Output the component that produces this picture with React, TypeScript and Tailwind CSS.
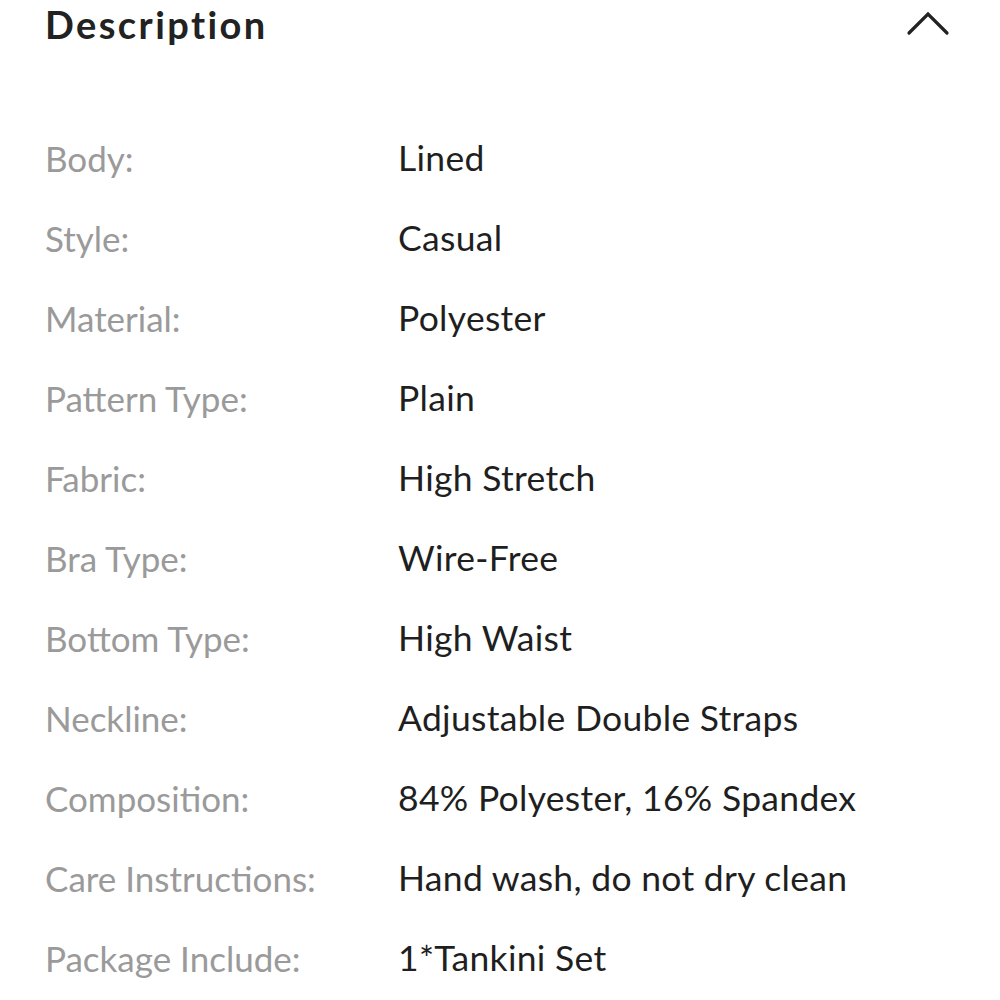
const specs = [
  ["Body:", "Lined"],
  ["Style:", "Casual"],
  ["Material:", "Polyester"],
  ["Pattern Type:", "Plain"],
  ["Fabric:", "High Stretch"],
  ["Bra Type:", "Wire-Free"],
  ["Bottom Type:", "High Waist"],
  ["Neckline:", "Adjustable Double Straps"],
  ["Composition:", "84% Polyester, 16% Spandex"],
  ["Care Instructions:", "Hand wash, do not dry clean"],
  ["Package Include:", "1*Tankini Set"],
];

export default function App() {
  return (
    <main className="w-[1000px] h-[1000px] bg-white overflow-hidden font-['Lato','Noto_Sans',sans-serif]">
      <div className="flex items-center justify-between h-[48px] pl-[45px] pr-[50px]">
        <h2 className="text-[38px] font-bold tracking-[2.4px] text-[#222]">Description</h2>
        <svg width="44" height="28" viewBox="0 0 44 28" fill="none" stroke="#222" strokeWidth="3.2" strokeLinecap="round" strokeLinejoin="miter">
          <path d="M3 23 L22 4 L41 23" />
        </svg>
      </div>

      <div className="flex flex-col pt-[70px] pl-[45px]">
        {specs.map(([label, value]) => (
          <div key={label} className="flex items-center h-[80px]">
            <span className="w-[353px] text-[35px] text-[#9a9a9a]">{label}</span>
            <span className="text-[35.5px] tracking-[0.3px] text-[#1f1f1f]">{value}</span>
          </div>
        ))}
      </div>
    </main>
  );
}
